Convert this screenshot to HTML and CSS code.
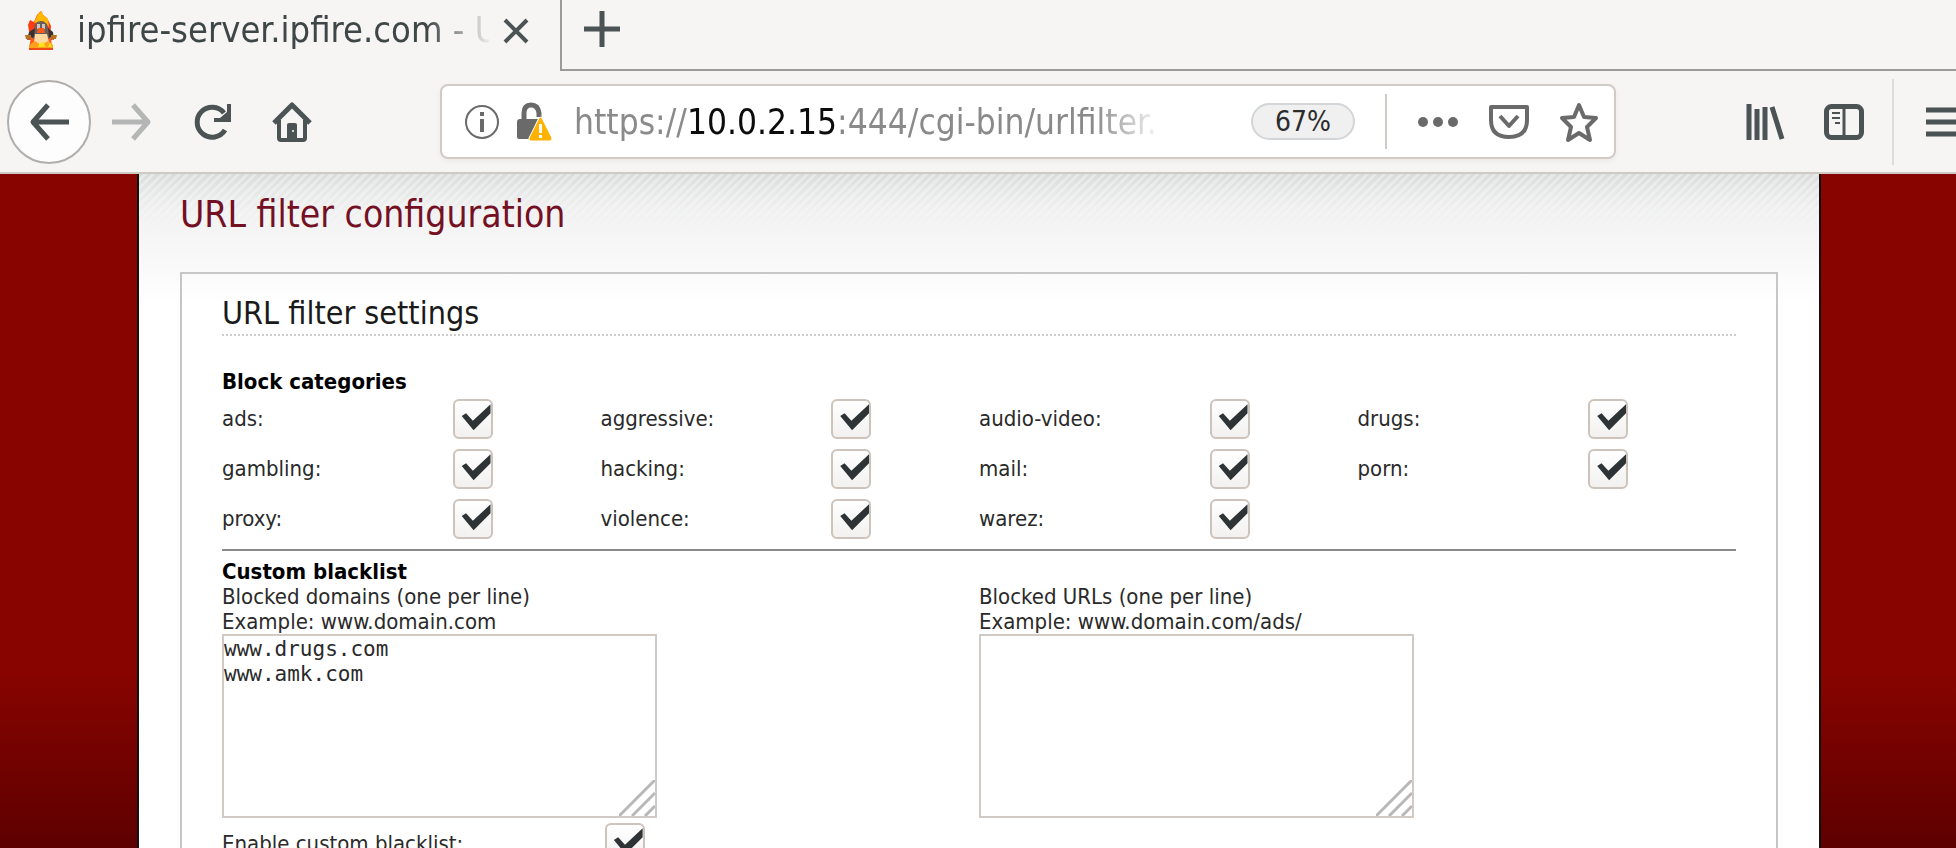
FILE: index.html
```html
<!DOCTYPE html>
<html lang="en">
<head>
<meta charset="utf-8">
<title>ipfire-server.ipfire.com - URL filter</title>
<link rel="stylesheet" href="styles.css">
</head>
<body>
<header class="browser">
  <div class="tabs">
    <div class="tab">
      <svg class="favicon" width="32" height="42" viewBox="0 0 32 42" aria-hidden="true">
        <path fill="#ff3b12" d="M5 27 3 15l2-5 4 2 3-7 4-4 2 4 4 3 4 8-1 10 3 4H3z"/>
        <path fill="#ffb800" d="M9 13 13 4l4-3 1 4 5 4 1 8-6-6z"/>
        <path fill="#6a5e5b" d="M10 14q6-6 12 0l2 10 3 6H5l4-6z"/>
        <path fill="#3a3030" d="M4 22l6-4-1 9-7 3zM28 22l-5-4 1 9 5 3z"/>
        <path fill="#cfc6c1" d="M12 14h3v5h-3zm5 0h3v5h-3z"/>
        <path fill="#ff5a1c" d="M13 18h6l1 5h-8zM4 38l2-11 6 4h9l5-4 1 11z"/>
        <path fill="#ffd9a0" d="M10 24h12l2 8-8 4-7-4z"/>
        <path fill="#b8701c" d="M0 25h6v4H1zM26 25h6l-1 4h-5z"/>
        <path fill="#ffa01c" d="M4 35l6-4 6 4 7-4 5 4v4H4z"/>
        <path fill="#ffe21a" d="M14 34l4-2 3 5h-8zM25 32l2 5h-4z"/>
        <path fill="#f04a18" d="M4 38h24v2H4z"/>
      </svg>
      <span class="tab-title">ipfire-server.ipfire.com - URL</span>
      <button class="icon-btn" aria-label="Close tab">
        <svg width="26" height="26" viewBox="0 0 26 26"><path d="M2 2l22 22M24 2 2 24" stroke="#4b5355" stroke-width="4" fill="none"/></svg>
      </button>
    </div>
    <div class="tab-rest">
      <button class="icon-btn" aria-label="New tab">
        <svg width="36" height="36" viewBox="0 0 36 36"><path d="M18 0v36M0 18h36" stroke="#4b5355" stroke-width="5" fill="none"/></svg>
      </button>
    </div>
  </div>
  <div class="toolbar">
    <nav class="nav-buttons">
      <button class="icon-btn back" aria-label="Back">
        <svg width="40" height="40" viewBox="0 0 40 40"><path d="M19 3 4 20l15 17M4 20h36" stroke="#4b5355" stroke-width="5" fill="none" stroke-linejoin="round"/></svg>
      </button>
      <button class="icon-btn" aria-label="Forward">
        <svg width="40" height="40" viewBox="0 0 40 40"><path d="M21 3l15 17-15 17M36 20H0" stroke="#b4b6b6" stroke-width="5" fill="none" stroke-linejoin="round"/></svg>
      </button>
      <button class="icon-btn" aria-label="Reload">
        <svg width="40" height="40" viewBox="0 0 40 40"><path d="M33 28A15 15 0 1 1 32 11" stroke="#4b5355" stroke-width="5" fill="none"/><path d="M35 2h4v18H22v-4h6l7-6z" fill="#4b5355"/></svg>
      </button>
      <button class="icon-btn" aria-label="Home">
        <svg width="40" height="42" viewBox="0 0 40 42"><path d="M2 22 20 4l18 18" stroke="#4b5355" stroke-width="5" fill="none" stroke-linejoin="round"/><path d="M7 19v18q0 2 2 2h22q2 0 2-2V19" stroke="#4b5355" stroke-width="4" fill="none"/><path d="M15 39V24q0-2 2-2h6q2 0 2 2v15z" fill="#4b5355"/><circle cx="21" cy="30" r="1" fill="#fff"/></svg>
      </button>
    </nav>
    <div class="urlbar">
      <svg width="36" height="36" viewBox="0 0 36 36" aria-hidden="true"><circle cx="18" cy="18" r="16" fill="none" stroke="#6a6a6a" stroke-width="2"/><path d="M16 15h4v13h-4zM16 8h4v4h-4z" fill="#6a6a6a"/></svg>
      <svg class="lock" width="36" height="40" viewBox="0 0 36 40" aria-hidden="true"><path d="M8 19V11q0-8 7-8t8 8v4" fill="none" stroke="#6a6a6a" stroke-width="5"/><path d="M1 20q0-3 3-3h18L13 37H3q-2 0-2-2z" fill="#6a6a6a"/><path d="M23 16q2-2 3 0l10 20q0 3-2 3H15q-3 0-2-3z" fill="#ffb300" stroke="#fff" stroke-width="1"/><path d="M23 22h3v9h-3zM23 33h3v3h-3z" fill="#fff"/></svg>
      <div class="address">https://<b>10.0.2.15</b>:444/cgi-bin/urlfilter.</div>
      <button class="zoom">67%</button>
      <span class="divider"></span>
      <div class="page-actions">
        <button class="icon-btn" aria-label="Page actions">
          <svg width="42" height="12" viewBox="0 0 42 12" fill="#6a6a6a"><circle cx="6" cy="6" r="5"/><circle cx="21" cy="6" r="5"/><circle cx="36" cy="6" r="5"/></svg>
        </button>
        <button class="icon-btn" aria-label="Save to Pocket">
          <svg width="40" height="36" viewBox="0 0 40 36" fill="none" stroke="#6a6a6a" stroke-width="4" stroke-linejoin="round"><path d="M2 3h36v13q0 17-18 17T2 16z"/><path d="M11 12l9 10 9-10"/></svg>
        </button>
        <button class="icon-btn" aria-label="Bookmark">
          <svg width="40" height="42" viewBox="0 0 40 42" fill="none" stroke="#6a6a6a" stroke-width="4" stroke-linejoin="round"><path d="M20 4l5 12 12 1-9 9 3 13-11-7-11 7 3-13-9-9 12-1z"/></svg>
        </button>
      </div>
    </div>
    <div class="tools">
      <button class="icon-btn" aria-label="Library">
        <svg width="40" height="36" viewBox="0 0 40 36" stroke="#4b5355" stroke-width="5" fill="none"><path d="M3 0v36M11 5v31M19 3v33M26 3l10 32"/></svg>
      </button>
      <button class="icon-btn" aria-label="Sidebars">
        <svg width="40" height="36" viewBox="0 0 40 36" stroke="#4b5355" fill="none"><rect x="2.500" y="2.500" width="35" height="31" rx="5" stroke-width="5"/><path d="M20 3v30" stroke-width="3"/><path d="M8 9h8M8 14h8M11 19h5" stroke-width="2"/></svg>
      </button>
    </div>
    <button class="icon-btn menu" aria-label="Menu">
      <svg width="40" height="30" viewBox="0 0 40 30" stroke="#4b5355" stroke-width="5"><path d="M0 3h40M0 15h40M0 27h40"/></svg>
    </button>
  </div>
</header>
<div class="backdrop">
  <main class="content">
    <h1>URL filter configuration</h1>
    <form class="box">
      <h2>URL filter settings</h2>
      <h3>Block categories</h3>
      <div class="categories">
        <div class="category"><label for="ads">ads:</label><input type="checkbox" id="ads" checked></div>
        <div class="category"><label for="aggressive">aggressive:</label><input type="checkbox" id="aggressive" checked></div>
        <div class="category"><label for="av">audio-video:</label><input type="checkbox" id="av" checked></div>
        <div class="category"><label for="drugs">drugs:</label><input type="checkbox" id="drugs" checked></div>
        <div class="category"><label for="gambling">gambling:</label><input type="checkbox" id="gambling" checked></div>
        <div class="category"><label for="hacking">hacking:</label><input type="checkbox" id="hacking" checked></div>
        <div class="category"><label for="mail">mail:</label><input type="checkbox" id="mail" checked></div>
        <div class="category"><label for="porn">porn:</label><input type="checkbox" id="porn" checked></div>
        <div class="category"><label for="proxy">proxy:</label><input type="checkbox" id="proxy" checked></div>
        <div class="category"><label for="violence">violence:</label><input type="checkbox" id="violence" checked></div>
        <div class="category"><label for="warez">warez:</label><input type="checkbox" id="warez" checked></div>
      </div>
      <hr>
      <h3>Custom blacklist</h3>
      <div class="lists">
        <div class="list">
          <label for="domains">Blocked domains (one per line)<br>Example: www.domain.com</label>
          <div class="area">
            <textarea id="domains" spellcheck="false">www.drugs.com
www.amk.com</textarea>
            <svg class="grip" width="36" height="36" viewBox="0 0 36 36" stroke="#b8b8b8" stroke-width="3"><path d="M0 36 36 0M13 36 36 13M26 36l10-10"/></svg>
          </div>
        </div>
        <div class="list">
          <label for="urls">Blocked URLs (one per line)<br>Example: www.domain.com/ads/</label>
          <div class="area">
            <textarea id="urls" spellcheck="false"></textarea>
            <svg class="grip" width="36" height="36" viewBox="0 0 36 36" stroke="#b8b8b8" stroke-width="3"><path d="M0 36 36 0M13 36 36 13M26 36l10-10"/></svg>
          </div>
        </div>
      </div>
      <div class="enable"><label for="enable">Enable custom blacklist:</label><input type="checkbox" id="enable" checked></div>
    </form>
  </main>
</div>
</body>
</html>
```
FILE: styles.css
```css
* { box-sizing: border-box; }
html, body { height: 100%; }
body {
  margin: 0;
  display: flex;
  flex-direction: column;
  overflow: hidden;
  background: #f6f5f4;
  color: #2a2a2a;
  font-family: "DejaVu Sans Condensed", "DejaVu Sans", sans-serif;
  font-size: 22px;
  line-height: 25px;
}
button { font: inherit; color: inherit; }
.icon-btn { border: 0; padding: 0; background: none; display: flex; flex: none; }
svg { display: block; flex: none; }

.browser { flex: none; background: #f6f5f4; border-bottom: 2px solid #cfc9c4; }
.tabs { display: flex; height: 71px; }
.tab {
  flex: none;
  width: 560px;
  height: 62px;
  padding: 0 31px 0 25px;
  display: flex;
  align-items: center;
}
.tab-title {
  flex: 1;
  margin: 0 14px 2px 20px;
  overflow: hidden;
  white-space: nowrap;
  color: #3f4648;
  font-size: 36px;
  line-height: 42px;
  -webkit-mask-image: linear-gradient(to right, #000 350px, transparent 416px);
  mask-image: linear-gradient(to right, #000 350px, transparent 416px);
}
.tab-rest {
  flex: 1;
  padding: 11px 22px;
  border-left: 2px solid #9c9a98;
  border-bottom: 2px solid #9c9a98;
}
.toolbar { display: flex; align-items: center; height: 101px; padding-left: 7px; overflow: hidden; }
.nav-buttons { flex: none; display: flex; align-items: center; width: 433px; gap: 40px; }
.back {
  width: 84px;
  height: 84px;
  margin-right: -19px;
  align-items: center;
  justify-content: center;
  border: 2px solid #b0aeac;
  border-radius: 50%;
  background: #fdfdfd;
}
.urlbar {
  flex: 1;
  min-width: 0;
  height: 75px;
  display: flex;
  align-items: center;
  padding: 0 15px 0 22px;
  border: 2px solid #d2cac4;
  border-radius: 8px;
  background: #fff;
  box-shadow: 0 2px 6px #0000000d;
}
.lock { margin-left: 16px; }
.address {
  flex: 1;
  min-width: 0;
  margin: 0 87px 0 22px;
  overflow: hidden;
  white-space: nowrap;
  color: #8a8a8a;
  font-size: 35px;
  line-height: 44px;
  -webkit-mask-image: linear-gradient(to left, transparent, #000 70px);
  mask-image: linear-gradient(to left, transparent, #000 70px);
}
.address b { font-weight: 400; color: #0c0c0c; }
.zoom {
  flex: none;
  width: 104px;
  height: 37px;
  padding: 0;
  border: 2px solid #d3d6d8;
  border-radius: 19px;
  background: #f0f0f0;
  color: #2c2c2c;
  font-size: 28px;
  line-height: 32px;
}
.divider { flex: none; width: 2px; height: 55px; margin: 0 30px; background: #d2cac4; }
.page-actions { display: flex; align-items: center; gap: 30px; }
.tools { display: flex; gap: 38px; padding: 0 28px 0 130px; }
.menu { height: 86px; align-items: center; padding-left: 32px; border-left: 2px solid #dedcda; margin-right: -10px; }

.backdrop {
  flex: 1;
  min-height: 0;
  padding: 0 135px 0 137px;
  overflow: hidden;
  background: linear-gradient(#870400 0, #870400 500px, #5c0000 680px);
}
.content {
  min-height: 100%;
  padding: 21px 41px 0;
  border: solid #111;
  border-width: 0 2px;
  background:
    linear-gradient(#f4f4f400, #f4f4f4 100%) 0 0 / 100% 54px no-repeat,
    repeating-linear-gradient(135deg, #00000008 0 3px, #ffffff30 3px 6px) 0 0 / 100% 54px no-repeat,
    linear-gradient(#e0e2e2, #f4f4f4 54px, #fff 130px);
}
h1, h2, h3 { margin: 0; font-weight: 400; }
h1 { color: #741024; font-size: 37px; line-height: 40px; }
.box { margin-top: 37px; padding: 19px 40px 0; border: 2px solid #c6c6c6; }
h2 { font-size: 32px; line-height: 40px; padding-bottom: 1px; border-bottom: 2px dotted #ccc; color: #1a1a1a; }
h3 { font-size: 22px; line-height: 25px; font-weight: 700; color: #000; }
h2 + h3 { margin-top: 33px; }
.categories { display: grid; grid-template-columns: repeat(4, 1fr); }
.category { display: grid; grid-template-columns: 61% 1fr; align-items: center; height: 50px; }
.category label { padding-bottom: 1px; }
input[type="checkbox"] {
  appearance: none;
  width: 40px;
  height: 40px;
  margin: 0;
  border: 2px solid #cdc3bb;
  border-radius: 6px;
  background: linear-gradient(#fff, #f2f1f0);
}
input[type="checkbox"]:checked::before {
  content: "";
  display: block;
  width: 100%;
  height: 100%;
  background: #2e3436;
  clip-path: polygon(19% 42%, 31% 34%, 50% 55%, 99% 9%, 99% 34%, 52% 81%);
}
hr { margin: 5px 0 0; border: 0; height: 2px; background: #8a8a8a; }
hr + h3 { margin-top: 8px; }
.lists { display: grid; grid-template-columns: 1fr 1fr; }
.area { position: relative; width: 435px; }
textarea {
  display: block;
  width: 100%;
  height: 184px;
  padding: 1px 0 0;
  border: 2px solid #d0c9c4;
  background: #fff;
  color: #2a2a2a;
  font: 21px/25px "DejaVu Sans Mono", monospace;
  resize: none;
}
.grip { position: absolute; right: 2px; bottom: 2px; }
.enable { display: grid; grid-template-columns: 383px 1fr; align-items: center; height: 50px; }
```
